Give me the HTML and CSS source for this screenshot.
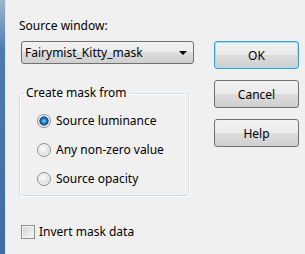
FILE: index.html
```html
<!DOCTYPE html>
<html lang="en">
<head>
  <meta charset="UTF-8" />
  <title>Source window</title>
  <link rel="stylesheet" href="styles.css">
</head>
<body>
  <div class="dialog">
    <div class="frame"></div>

    <div class="main">
      <div class="left">
        <div class="caption">Source window:</div>
        <div class="dropdown">
          <span>Fairymist_Kitty_mask</span>
          <svg class="arrow" width="8" height="4" viewBox="0 0 8 4"><path d="M0 0h8L4 4z" fill="#000"/></svg>
        </div>

        <fieldset class="group">
          <legend>Create mask from</legend>
          <div class="option"><span class="radio checked"></span>Source luminance</div>
          <div class="option"><span class="radio"></span>Any non-zero value</div>
          <div class="option"><span class="radio"></span>Source opacity</div>
        </fieldset>

        <div class="check-row"><span class="checkbox"></span>Invert mask data</div>
      </div>

      <div class="right">
        <button class="btn default">OK</button>
        <button class="btn">Cancel</button>
        <button class="btn">Help</button>
      </div>
    </div>
  </div>
</body>
</html>
```

FILE: styles.css
```css
body {
  margin: 0;
  padding: 0;
  background: #f0f0f0;
  font-family: "Noto Sans", "Open Sans", sans-serif;
  font-size: 12px;
  color: #000;
}

.dialog {
  display: flex;
  height: 254px;
}

.frame {
  width: 5px;
  background: linear-gradient(to bottom, #9fb4cc, #4a7bb2 20%, #3d6da6);
  border-right: 1px solid #dfe6ee;
}

.main {
  flex: 1;
  display: flex;
}

.left {
  width: 183px;
  padding: 18px 0 0 13px;
}

.caption {
  line-height: 16px;
}

.dropdown {
  margin: 7px 0 0 2px;
  height: 21px;
  width: 162px;
  border: 1px solid #707070;
  border-radius: 3px;
  background: linear-gradient(to bottom, #f2f2f2, #ebebeb 50%, #dddddd 50%, #cfcfcf);
  display: flex;
  align-items: center;
  justify-content: space-between;
  padding: 0 6px 0 3px;
}

.group {
  margin: 22px 0 0 0;
  padding: 6px 0 0 4px;
  width: 170px;
  height: 110px;
  box-sizing: border-box;
  border: 1px solid #d5dfe5;
  border-radius: 3px;
  box-shadow: inset 1px 1px 0 #fff, 1px 1px 0 #fff;
}

.group legend {
  padding: 0 2px;
  margin: 0;
  line-height: 14px;
}

.option {
  display: flex;
  align-items: center;
  gap: 5px;
  height: 29px;
  margin-left: 13px;
}

.radio {
  width: 12px;
  height: 12px;
  border: 1px solid #8e8f8f;
  border-radius: 50%;
  background: radial-gradient(circle at 40% 40%, #fdfdfd, #e0e0e0 60%, #c8c8c8);
  box-shadow: inset 0 0 0 1px #f4f4f4;
}

.radio.checked {
  background: radial-gradient(circle at 50% 50%, #a8dcff 0, #2a8ad4 2px, #0d4e8f 4px, #3c6f9c 4.5px, #e8e8e8 5px, #d0d0d0);
}

.check-row {
  display: flex;
  align-items: center;
  gap: 4px;
  margin: 27px 0 0 2px;
}

.checkbox {
  width: 12px;
  height: 12px;
  border: 1px solid #8e8f8f;
  background: linear-gradient(135deg, #cfcfcf, #f2f2f2 80%, #fff);
  box-shadow: inset 0 0 0 1px #f4f4f4;
}

.right {
  display: flex;
  flex-direction: column;
  gap: 11px;
  padding: 41px 0 0 12px;
}

.btn {
  width: 85px;
  height: 28px;
  border: 1px solid #707070;
  border-radius: 3px;
  background: linear-gradient(to bottom, #f2f2f2, #ebebeb 50%, #dddddd 50%, #cfcfcf);
  font-family: inherit;
  font-size: 12px;
  color: #000;
  padding: 0;
}

.btn.default {
  border-color: #3c9fd6;
  box-shadow: inset 0 0 0 1px #9fe0f7;
}
```
